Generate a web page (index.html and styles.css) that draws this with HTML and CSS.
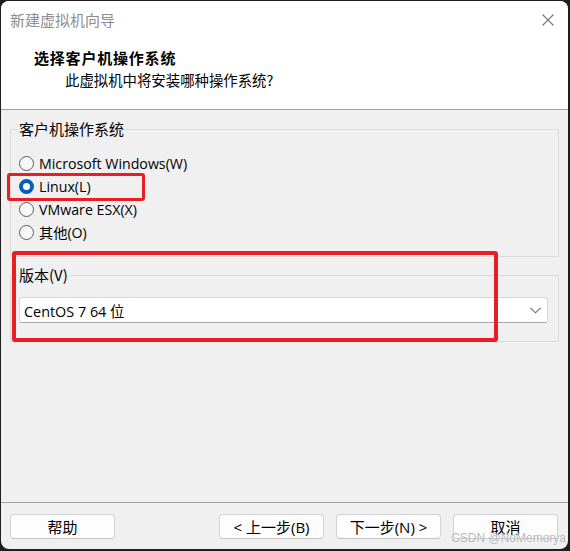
FILE: index.html
```html
<!DOCTYPE html>
<html lang="zh-CN">
<head>
<meta charset="utf-8">
<title>新建虚拟机向导</title>
<link rel="stylesheet" href="styles.css">
</head>
<body>
<div class="window">
  <div class="top">
    <div class="titlebar">
      <span class="title">新建虚拟机向导</span>
      <svg class="close" width="12" height="12" viewBox="0 0 12 12"><path d="M0.5 0.5 L11.5 11.5 M11.5 0.5 L0.5 11.5" stroke="#7a7a7a" stroke-width="1.1" fill="none"/></svg>
    </div>
    <div class="header">
      <div class="h-title">选择客户机操作系统</div>
      <div class="h-sub">此虚拟机中将安装哪种操作系统?</div>
    </div>
  </div>
  <div class="body">
    <fieldset class="group group-os">
      <legend>客户机操作系统</legend>
      <div class="radio"><span class="dot"></span><span>Microsoft Windows(W)</span></div>
      <div class="radio"><span class="dot checked"></span><span>Linux(L)</span></div>
      <div class="radio"><span class="dot"></span><span>VMware ESX(X)</span></div>
      <div class="radio"><span class="dot"></span><span>其他(O)</span></div>
    </fieldset>
    <fieldset class="group group-ver">
      <legend>版本(V)</legend>
      <div class="select">
        <span>CentOS 7 64 位</span>
        <svg width="11" height="7" viewBox="0 0 11 7"><path d="M0.5 0.8 L5.5 5.8 L10.5 0.8" stroke="#6a6a6a" stroke-width="1.1" fill="none"/></svg>
      </div>
    </fieldset>
  </div>
  <div class="footer">
    <button class="btn">帮助</button>
    <div class="spacer"></div>
    <button class="btn">&lt; 上一步(B)</button>
    <button class="btn">下一步(N) &gt;</button>
    <button class="btn">取消</button>
  </div>
  <div class="mark mark-1"></div>
  <div class="mark mark-2"></div>
  <div class="watermark">CSDN @NoMemorya</div>
</div>
</body>
</html>
```
FILE: styles.css
```css
* { box-sizing: border-box; }
html, body { margin: 0; padding: 0; }
body {
  width: 570px;
  height: 551px;
  background: #1e1e1e;
  overflow: hidden;
  font-family: "Open Sans", "Noto Sans CJK SC", sans-serif;
  font-size: 15px;
  color: #000;
}
.window {
  position: relative;
  margin: 1px 2px 2px 1px;
  width: 567px;
  height: 548px;
  background: #f0f0f0;
  border-radius: 8px;
  overflow: hidden;
  display: flex;
  flex-direction: column;
}
.top {
  background: #fff;
  height: 109px;
  border-bottom: 1px solid #a0a0a0;
}
.titlebar {
  height: 38px;
  display: flex;
  align-items: center;
  justify-content: space-between;
  padding: 0 14px 0 9px;
}
.title {
  color: #8e8e8e;
  font-family: "Noto Sans CJK SC", sans-serif;
  font-size: 15px;
  line-height: 20px;
}
.close { display: block; }
.header { padding-top: 9px; }
.h-title {
  padding-left: 33px;
  font-family: "Noto Sans CJK SC", sans-serif;
  font-weight: 700;
  font-size: 15px;
  line-height: 20px;
  letter-spacing: 0.8px;
}
.h-sub {
  margin-top: 2px;
  padding-left: 64px;
  font-family: "Noto Sans CJK SC", sans-serif;
  font-size: 14.4px;
  line-height: 20px;
}
.body {
  flex: 1;
  padding: 9px 9px 0 9px;
}
.group {
  margin: 0;
  min-width: 0;
  border: 1px solid #dadada;
  padding: 0;
}
.group legend {
  margin-left: 7px;
  padding: 0 1px;
  line-height: 20px;
  font-size: 15px;
  font-family: "Noto Sans CJK SC", sans-serif;
}
.group-os { padding: 13px 0 12px 0; }
.radio {
  height: 23px;
  display: flex;
  align-items: center;
  padding-left: 8px;
  gap: 5px;
  line-height: 20px;
  font-size: 14.2px;
}
.dot {
  width: 15px;
  height: 15px;
  border-radius: 50%;
  border: 1px solid #5c5c5c;
  background: #f8f8f8;
  flex: none;
}
.dot.checked {
  border: 4px solid #005fb8;
  background: #fff;
}
.group-ver {
  margin-top: 8px;
  padding: 12px 10px 18px 8px;
}
.group-ver legend { margin-left: -1px; }
.select {
  height: 26px;
  background: #fff;
  border: 1px solid #d6d6d6;
  border-bottom-color: #a8a8a8;
  border-radius: 3px;
  display: flex;
  align-items: center;
  justify-content: space-between;
  padding: 0 6px 0 4px;
  font-size: 14.4px;
}
.footer {
  height: 47px;
  border-top: 1px solid #a0a0a0;
  display: flex;
  align-items: flex-start;
  padding: 11px 10px 0 9px;
  gap: 12px;
}
.spacer { flex: 1; }
.btn {
  width: 105px;
  height: 25px;
  margin: 0;
  padding: 0;
  background: #fdfdfd;
  border: 1px solid #d2d2d2;
  border-bottom-color: #c4c4c4;
  border-radius: 4px;
  font-family: "Open Sans", "Noto Sans CJK SC", sans-serif;
  font-size: 15px;
  line-height: 20px;
  color: #000;
}
.mark {
  position: absolute;
  border-style: solid;
  border-color: #e81d25;
  border-radius: 3px;
}
.mark-1 {
  left: 6px;
  top: 172px;
  width: 138px;
  height: 28px;
  border-width: 3px;
}
.mark-2 {
  left: 11px;
  top: 250px;
  width: 486px;
  height: 91px;
  border-width: 4px;
}
.watermark {
  position: absolute;
  right: 2px;
  bottom: 4px;
  font-family: "Liberation Sans", sans-serif;
  font-size: 12px;
  line-height: 14px;
  color: rgba(170, 170, 170, 0.85);
  text-shadow: 0 0 1px rgba(255,255,255,0.8);
}
```
